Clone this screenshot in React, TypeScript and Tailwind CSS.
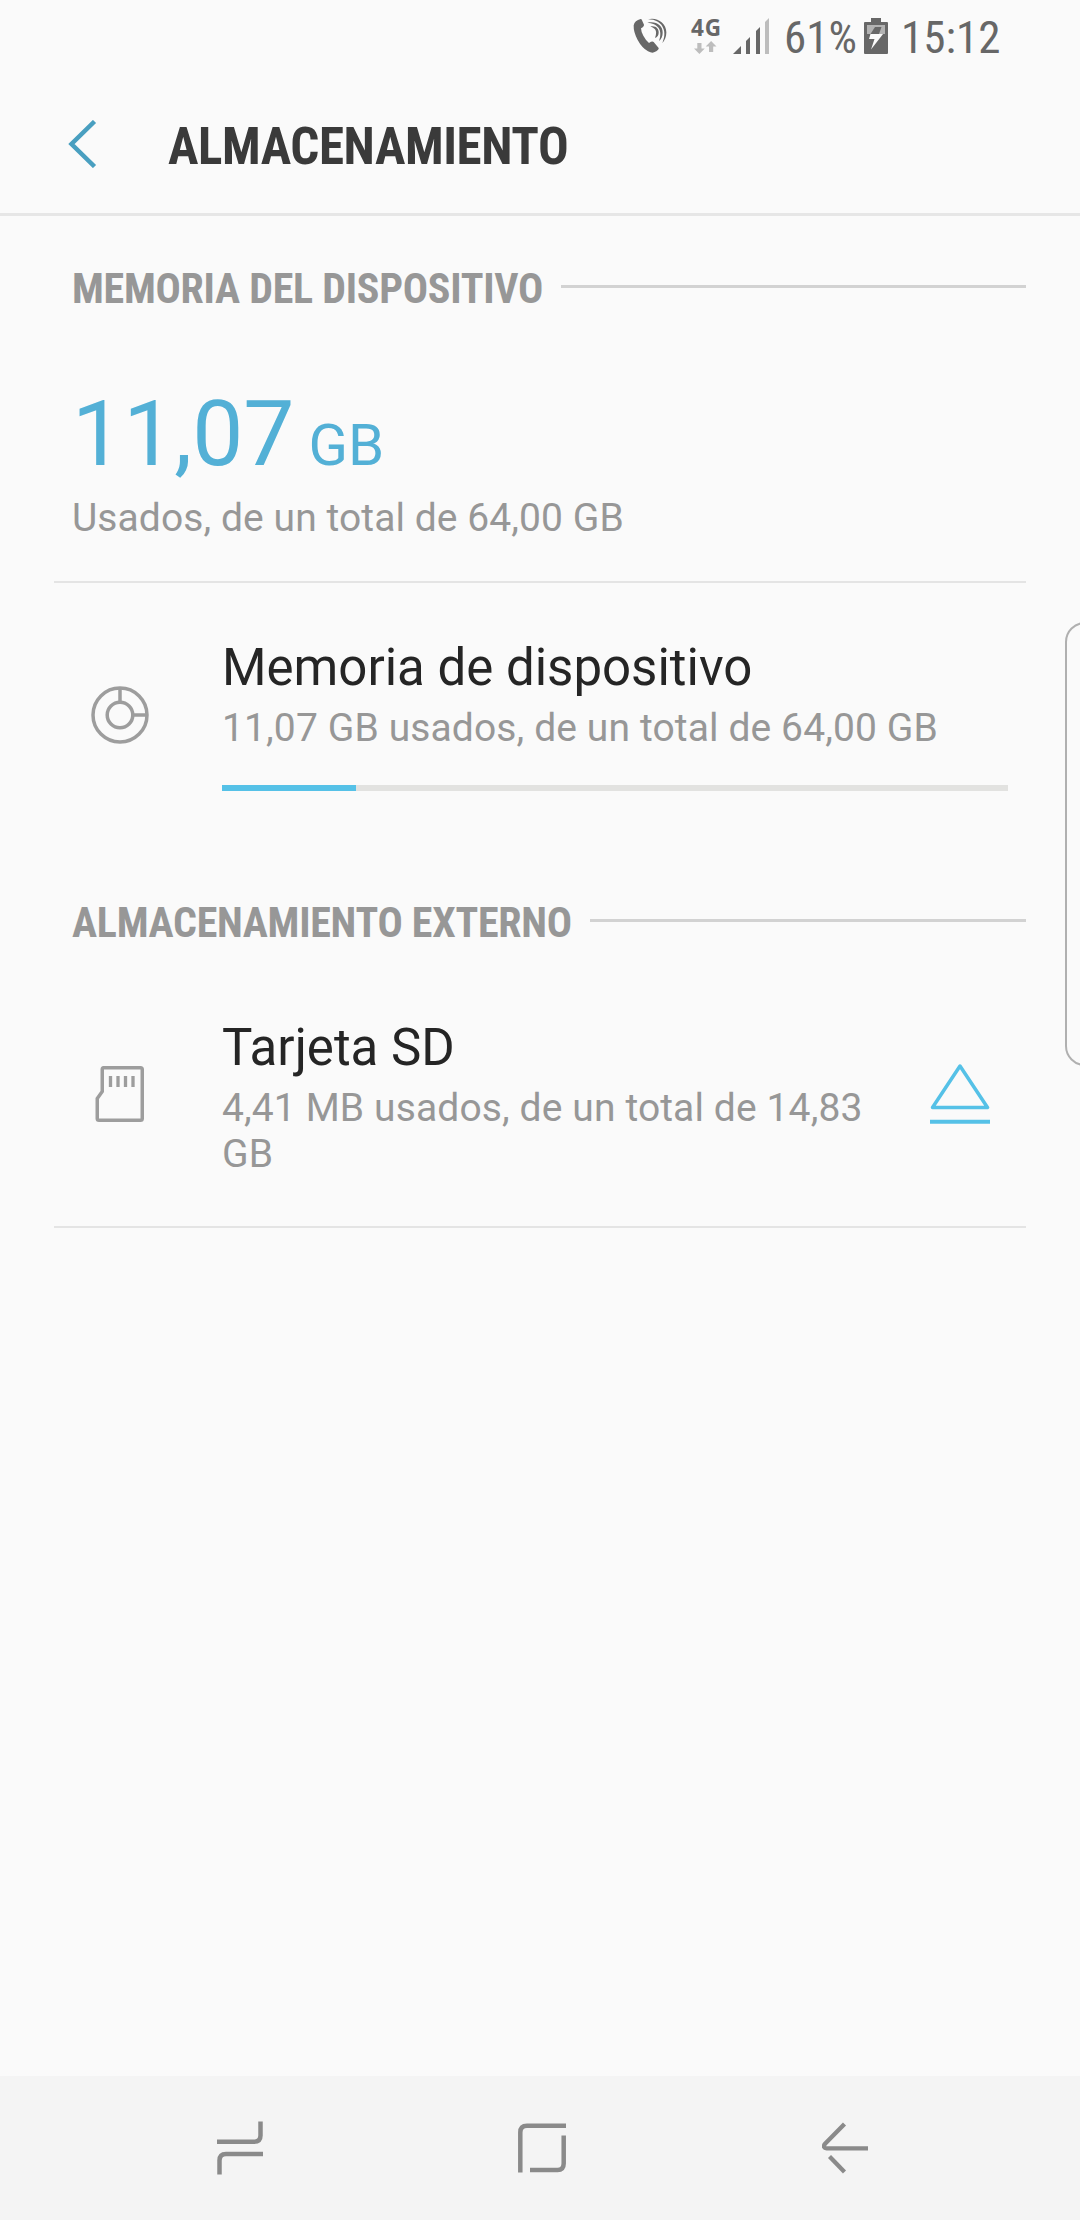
import type { ReactNode } from 'react';

function CallIcon() {
  return (
    <svg className="h-9 w-9" viewBox="0 0 108 108" fill="#676767" aria-hidden>
      <path d="M5 22Q8 7 26 3Q29 3 30 7L36 20Q37 25 27 31Q27 40 34 53Q42 68 51 75Q61 68 65 72L80 90Q82 96 66 103Q60 106 48 100Q30 90 17 66Q4 42 5 22Z" />
      <path d="M48 4C74 -4 104 16 103 44C103 56 98 67 91 75C97 60 99 46 95 34C89 14 70 4 48 4Z" />
      <path d="M46 14C72 8 93 22 92 44C92 55 88 63 81 69C87 53 86 39 80 30C74 20 60 15 46 14Z" />
      <path d="M55 26C70 22 81 32 80 44C80 51 76 57 69 60C74 47 73 39 69 34C66 30 61 27 55 26Z" />
    </svg>
  );
}

function DataArrows() {
  return (
    <svg className="h-[13px] w-[23px]" viewBox="0 0 23 13" fill="#bdbdbd" aria-hidden>
      <path d="M3.300 2H7.500V7.500H10.800L5.400 13L0 7.500H3.300Z" />
      <path d="M15 11H19.200V5.500H22.500L17.100 0L11.700 5.500H15Z" />
    </svg>
  );
}

function SignalIcon() {
  return (
    <svg className="h-9 w-9" viewBox="0 0 36 36" fill="#676767" aria-hidden>
      <path d="M0 36H8V28Z" />
      <path d="M13 36H17V19L13 23Z" />
      <path d="M23 36H27V9L23 13Z" />
      <path d="M32 36H36V0L32 4Z" fill="#bdbdbd" />
    </svg>
  );
}

function BatteryIcon() {
  return (
    <svg className="h-9 w-6" viewBox="0 0 24 36" aria-hidden>
      <path d="M7 0H17V4H23Q24 4 24 5V35Q24 36 23 36H1Q0 36 0 35V5Q0 4 1 4H7Z" fill="#676767" />
      <path d="M3 7H21V16H3Z" fill="#b2b2b2" />
      <path d="M11 9H17.500L15 16H6.500Z" fill="#676767" />
      <path d="M6.500 16H19L17.500 18L7 31.500L10.500 21H5Z" fill="#fafafa" />
    </svg>
  );
}

function StatusBar() {
  return (
    <div className="flex h-[75px] items-start pl-[632px] text-[45px] leading-[75px] text-[#676767]">
      <div className="mt-[18px] w-[59px]">
        <CallIcon />
      </div>
      <div className="mt-[18px] flex w-[42px] flex-col">
        <span className="h-[23px] font-['Open_Sans',sans-serif] text-[22.5px] leading-5 font-bold tracking-[1px]">4G</span>
        <span className="ml-[3px] flex">
          <DataArrows />
        </span>
      </div>
      <div className="mt-[18px] w-[51px]">
        <SignalIcon />
      </div>
      <span className="w-[80px] font-['Roboto_Condensed',Roboto,sans-serif]">61%</span>
      <div className="mt-[18px] w-[37px]">
        <BatteryIcon />
      </div>
      <span className="font-['Roboto_Condensed',Roboto,sans-serif]">15:12</span>
    </div>
  );
}

function Header() {
  return (
    <header className="flex h-[141px] items-start border-b-[3px] border-[#e6e6e6] pl-[68px]">
      <svg className="mt-[45px] h-12 w-[29px]" viewBox="0 0 29 48" fill="none" aria-hidden>
        <path d="M26.500 1.500L3.500 24L26.500 46.500" stroke="#499fc0" strokeWidth="4.500" />
      </svg>
      <h1 className="mt-[42px] ml-[71px] font-['Roboto_Condensed',Roboto,sans-serif] text-[51px] leading-[60px] font-bold tracking-[-0.4px] text-[#3a3a3a]">
        ALMACENAMIENTO
      </h1>
    </header>
  );
}

function SectionTitle({ children }: { children: ReactNode }) {
  return (
    <div className="flex pt-[42px] pr-[54px] pl-[72px]">
      <h2 className="font-['Roboto_Condensed',Roboto,sans-serif] text-[42px] leading-[62px] font-bold tracking-[-0.27px] whitespace-nowrap text-[#979797]">
        {children}
      </h2>
      <div className="mt-[27px] ml-[18px] h-[3px] flex-1 bg-[#d2d2d2]" />
    </div>
  );
}

function DiskIcon() {
  return (
    <svg className="h-[58px] w-[58px]" viewBox="0 0 58 58" fill="none" stroke="#9d9d9d" strokeWidth="3.500" aria-hidden>
      <circle cx="29" cy="29" r="27" />
      <circle cx="29" cy="29" r="12.800" />
      <path d="M29 2V16M42 29H56" />
    </svg>
  );
}

function SdCardIcon() {
  return (
    <svg className="h-14 w-[50px]" viewBox="0 0 50 56" fill="none" stroke="#9d9d9d" strokeWidth="3.500" aria-hidden>
      <path d="M8.500 1.750H45.500Q47.250 1.750 47.250 3.500V52.500Q47.250 54.250 45.500 54.250H4Q2.250 54.250 2.250 52.500V32.500L7.250 25.500V3.500Q7.250 1.750 8.500 1.750Z" />
      <path d="M15.500 10V21M23 10V21M30.500 10V21M38 10V21" strokeWidth="3.300" />
    </svg>
  );
}

function EjectIcon() {
  return (
    <svg className="h-[60px] w-[60px]" viewBox="0 0 60 60" fill="none" stroke="#55c1e7" strokeWidth="3.500" aria-hidden>
      <path d="M30 2L57.500 43.500H2.500Z" strokeLinejoin="round" />
      <path d="M0 57.800H60" strokeWidth="4" />
    </svg>
  );
}

const used = 17;

export default function App() {
  return (
    <div className="relative flex h-[2220px] w-[1080px] flex-col overflow-hidden bg-[#fafafa] font-['Roboto',sans-serif]">
      <StatusBar />
      <Header />

      <main className="flex-1">
        <SectionTitle>MEMORIA DEL DISPOSITIVO</SectionTitle>
        <div className="ml-[54px] h-[263px] w-[972px] border-b-2 border-[#e4e4e4] pt-[59px] pl-[18px]">
          <p className="flex h-[116px] items-baseline text-[91px] leading-[110px] text-[#53b0d6]">
            11,07
            <span className="ml-3.5 text-[58px]">GB</span>
          </p>
          <p className="text-[39px] leading-[46px] tracking-[0.08px] text-[#979797]">Usados, de un total de 64,00 GB</p>
        </div>

        <div className="flex h-[267px] pt-[55px] pl-[91px]">
          <div className="mt-[48px] w-[131px]">
            <DiskIcon />
          </div>
          <div className="w-[786px]">
            <p className="text-[51px] leading-[60px] text-[#252525]">Memoria de dispositivo</p>
            <p className="mt-[7px] text-[39px] leading-[46px] tracking-[0.12px] text-[#979797]">
              11,07 GB usados, de un total de 64,00 GB
            </p>
            <div className="mt-[34px] h-1.5 bg-[#e2e2e0]">
              <div className="h-1.5 bg-[#55c1e7]" style={{ width: `${used}%` }} />
            </div>
          </div>
        </div>

        <SectionTitle>ALMACENAMIENTO EXTERNO</SectionTitle>
        <div className="ml-[54px] flex h-[274px] w-[972px] border-b-2 border-[#e4e4e4] pt-[64px] pl-[41px]">
          <div className="mt-[48px] w-[127px]">
            <SdCardIcon />
          </div>
          <div className="w-[708px] pr-14">
            <p className="text-[51px] leading-[60px] text-[#252525]">Tarjeta SD</p>
            <p className="mt-[7px] text-[39px] leading-[46px] tracking-[0.12px] text-[#979797]">
              4,41 MB usados, de un total de 14,83 GB
            </p>
          </div>
          <button className="mt-[46px] h-[60px]" aria-label="Expulsar">
            <EjectIcon />
          </button>
        </div>
      </main>

      {/* edge panel handle */}
      <div className="absolute top-[622px] left-[1065px] h-[444px] w-[60px] rounded-[20px] border-2 border-[#b0b0b0]" />

      <nav className="flex h-36 items-start bg-[#f4f4f4] pl-[217px] text-[#8a8a8a]">
        <svg className="mt-[45px] h-[54px] w-[46px]" viewBox="0 0 46 54" fill="none" stroke="currentColor" strokeWidth="4.500" aria-hidden>
          <path d="M0 20.800H37Q43.500 20.800 43.500 14.500V0.500" />
          <path d="M46 33H9Q2.500 33 2.500 39.500V53.500" />
        </svg>
        <svg className="mt-[47px] ml-[255px] h-[50px] w-[48px]" viewBox="0 0 48 50" fill="none" stroke="currentColor" strokeWidth="4.500" aria-hidden>
          <path d="M48 2.800H9Q2.300 2.800 2.300 9.500V49.500" />
          <path d="M45.700 12.500V40.500Q45.700 47 39.500 47H12" />
        </svg>
        <svg className="mt-[46px] ml-[256px] h-[52px] w-[46px]" viewBox="0 0 46 52" fill="none" stroke="currentColor" strokeWidth="4.300" aria-hidden>
          <path d="M22.500 2L3.300 21.500C0.500 24.500 2.500 26.300 4.500 26.300H46" />
          <path d="M7.500 34.500L22.500 50" />
        </svg>
      </nav>
    </div>
  );
}
